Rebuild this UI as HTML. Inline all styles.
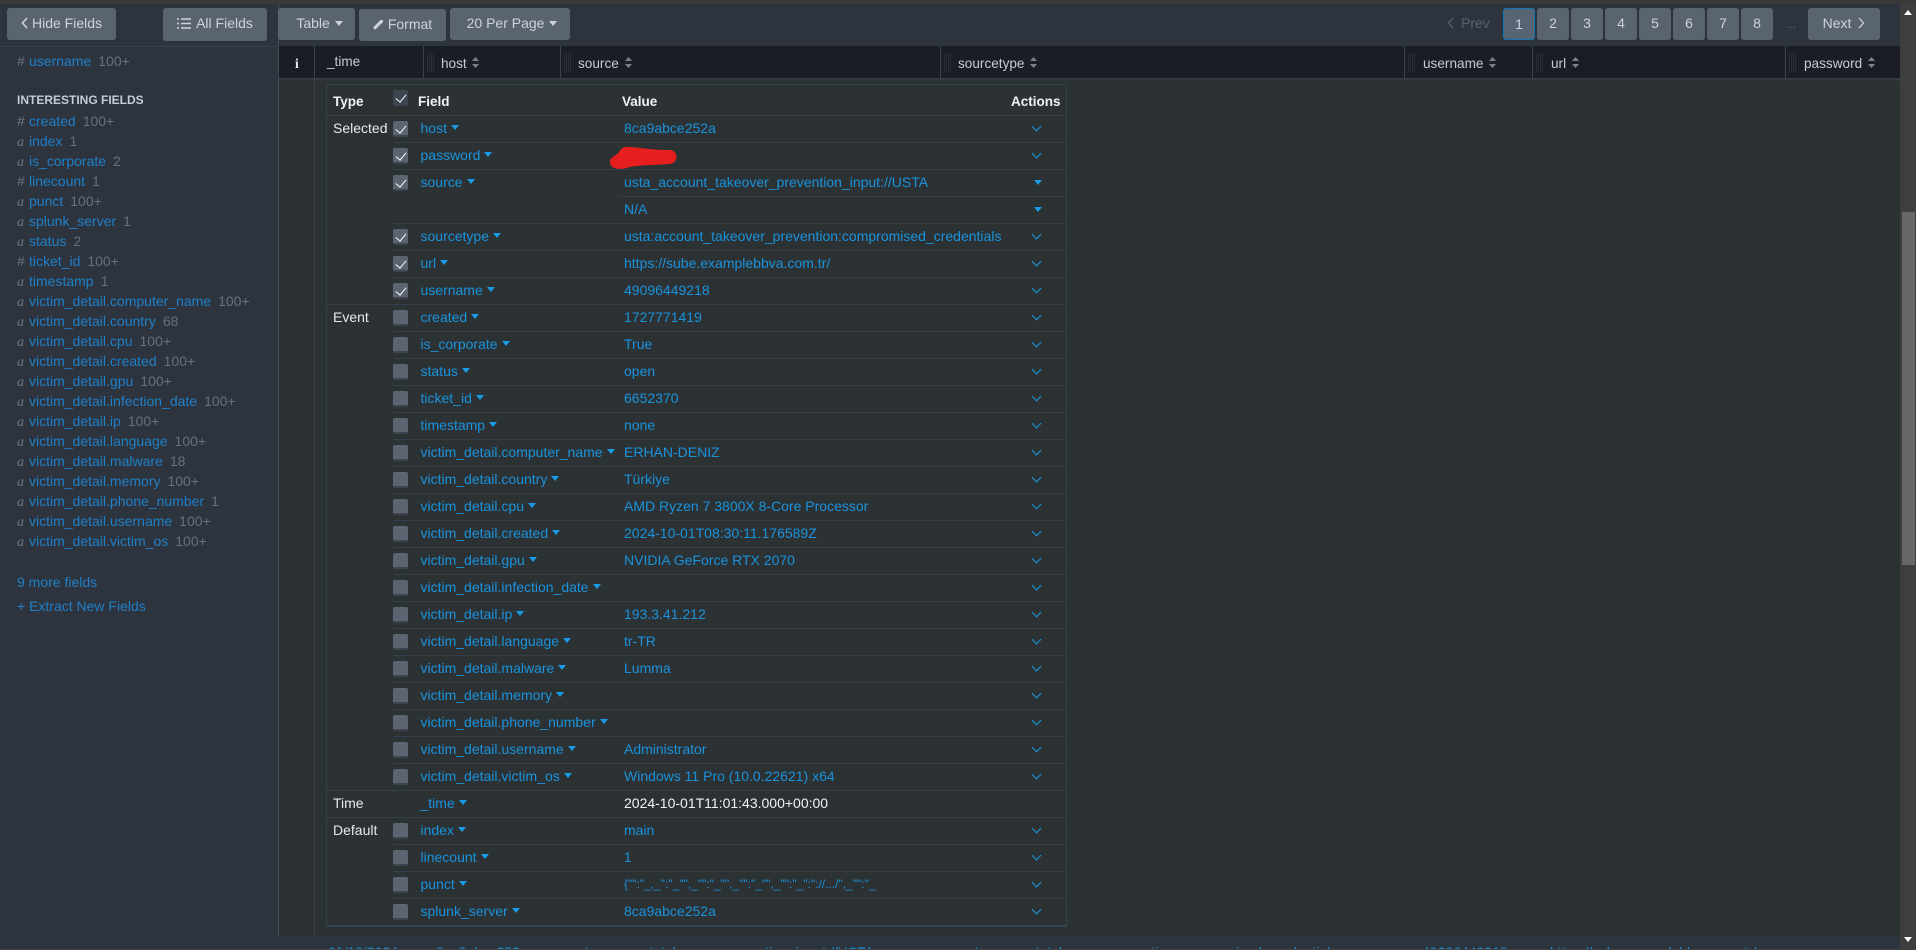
<!DOCTYPE html>
<html><head><meta charset="utf-8"><style>
*{box-sizing:border-box}
html,body{margin:0;padding:0;width:1916px;height:950px;overflow:hidden;background:#2c3134;font-family:"Liberation Sans",sans-serif;font-size:14px}
.a{position:absolute;white-space:nowrap}
#top{left:0;top:0;width:1916px;height:4px;background:#3a3a3a}
#bar{left:0;top:4px;width:1900px;height:42px;background:#2d343e}
#side{left:0;top:46px;width:278px;height:903px;background:#2d343e;border-top:1px solid #39424d}
#bottomrow{left:278px;top:936px;width:1622px;height:13px;background:#2c343e;overflow:hidden}
#bl{left:0;top:949px;width:1900px;height:1px;background:#3f3f3f}
#vb{left:278px;top:4px;width:1px;height:945px;background:#414a55}
#vb2{left:314px;top:78px;width:1px;height:871px;background:#39444f}
.b{position:absolute;background:#5a6470;color:#ccd3da;border-radius:3px;height:32px;line-height:31px;text-align:center;font-size:14px}
#hd{left:279px;top:46px;width:1621px;height:32px;background:#1a1e24;color:#c3cbd4}
#hs{left:279px;top:78px;width:1621px;height:3px;background:linear-gradient(#35404c,#2c3134)}
.hc{position:absolute;top:0;height:32px;line-height:33px;border-left:1px solid #3b434c;white-space:nowrap;font-size:13.6px}
.hc span{position:absolute;top:1px}
.hc span svg{margin-left:2px}
.hc u{position:absolute;left:3px;top:7px;width:7px;height:19px;background:repeating-linear-gradient(90deg,#2b3036 0 1px,transparent 1px 2px);opacity:.9}
#tb{left:326px;top:84px;width:741px;height:843px;border:1px solid #33424f;border-bottom:2px solid #33424f;color:#fff}
.th{position:absolute;top:0;height:31px;line-height:33px;font-weight:bold;color:#f0f3f5;font-size:13.5px}
.r{position:absolute;left:0;width:739px;height:27px;line-height:26px;color:#1a93dc}
.r>b{position:absolute;top:0;height:1px;right:0;background:#33404c}
.t{position:absolute;left:6px;color:#e6eaee;font-weight:normal}
.cb{position:absolute;left:66px;top:6px;width:15px;height:16px;background:#5b6470;border-radius:2px;border-bottom:2px solid #3e454f}
.on:after,.hcb:after{content:"";position:absolute;left:5px;top:2px;width:5px;height:9px;border:solid #fff;border-width:0 1.6px 1.6px 0;transform:rotate(40deg)}
.hcb{position:absolute;left:66px;top:5px;width:15px;height:16px;background:#3d4650;border-radius:2px}
.f{position:absolute;left:93.500px;white-space:nowrap}
.f:after,.car{content:"";display:inline-block;width:0;height:0;border:4px solid transparent;border-top:5px solid #1a9be6;border-bottom:0;margin-left:4px;vertical-align:3px}
.v{position:absolute;left:297px;white-space:nowrap}
.ch{position:absolute;left:706px;top:7.500px;width:7px;height:7px;border:solid #1a9be6;border-width:0 1.5px 1.5px 0;transform:rotate(45deg)}
.dc{position:absolute;left:707px;top:11px;width:0;height:0;border:4px solid transparent;border-top:5px solid #1a9be6;border-bottom:0;margin-left:0}
.s{position:absolute;left:17px;height:20px;line-height:20px;white-space:nowrap;color:#1f80c8;font-size:14px}
.s em{display:inline-block;width:12px;color:#6d7580;font-family:"Liberation Serif",serif;font-style:italic}
.s em.h{font-family:"Liberation Sans",sans-serif;font-style:normal}
.s i{font-style:normal;color:#68707b;margin-left:7px}
</style></head><body>
<div class="a" id="top"></div>
<div class="a" id="bar"></div>
<div class="a" id="side"></div>
<div class="a" id="vb"></div>

<div class="b" style="left:7px;top:8px;width:109px"><svg width="7" height="12" viewBox="0 0 7 12" style="vertical-align:-1px;margin-right:4px"><path d="M6 1L1.5 6 6 11" fill="none" stroke="#ccd3da" stroke-width="1.6"/></svg>Hide Fields</div>
<div class="b" style="left:163px;top:8px;width:104px;height:33px"><svg width="14" height="11" viewBox="0 0 14 11" style="vertical-align:-1px;margin-right:5px"><path d="M0 1h2M4 1h10M0 5.500h2M4 5.500h10M0 10h2M4 10h10" stroke="#ccd3da" stroke-width="1.600"/></svg>All Fields</div>
<div class="b" style="left:278px;top:8px;width:77px;padding-left:6px">Table <span class="car" style="border-top-color:#ccd3da;margin-left:1px;vertical-align:2px"></span></div>
<div class="b" style="left:359px;top:9px;width:87px"><svg width="11" height="11" viewBox="0 0 11 11" style="vertical-align:-1px;margin-right:4px"><path d="M1 10.500L0.500 8 7.500 1 10 1 10 3 3 10z" fill="#ccd3da"/></svg>Format</div>
<div class="b" style="left:450px;top:8px;width:120px;padding-left:4px">20 Per Page <span class="car" style="border-top-color:#ccd3da;margin-left:1px;vertical-align:2px"></span></div>

<div class="a" style="left:1447px;top:8px;height:32px;line-height:31px;color:#596370"><svg width="7" height="12" viewBox="0 0 7 12" style="vertical-align:-1px;margin-right:7px"><path d="M6 1L1.500 6 6 11" fill="none" stroke="#596370" stroke-width="1.300"/></svg>Prev</div>
<div class="b" style="left:1503px;top:8px;width:32px;border:1px solid #0f77b5;background:#566474">1</div>
<div class="b" style="left:1537px;top:8px;width:32px">2</div>
<div class="b" style="left:1571px;top:8px;width:32px">3</div>
<div class="b" style="left:1605px;top:8px;width:32px">4</div>
<div class="b" style="left:1639px;top:8px;width:32px">5</div>
<div class="b" style="left:1673px;top:8px;width:32px">6</div>
<div class="b" style="left:1707px;top:8px;width:32px">7</div>
<div class="b" style="left:1741px;top:8px;width:32px">8</div>
<div class="a" style="left:1786px;top:8px;height:32px;line-height:33px;color:#596370;font-size:12px">...</div>
<div class="b" style="left:1808px;top:8px;width:72px">Next <svg width="7" height="12" viewBox="0 0 7 12" style="vertical-align:-1px;margin-left:3px"><path d="M1 1l4.500 5L1 11" fill="none" stroke="#ccd3da" stroke-width="1.300"/></svg></div>

<div class="a" id="hd">
<div class="hc" style="left:0;width:35px;border:0"><span style="left:16px;font-family:'Liberation Serif',serif;font-weight:bold;color:#e8ecef">i</span></div>
<div class="hc" style="left:35px;width:109px"><span style="left:12px;top:-1px">_time</span></div>
<div class="hc" style="left:144px;width:136px"><u></u><span style="left:17px">host <svg width="7" height="11" viewBox="0 0 7 11"><path d="M0 4L3.500 0 7 4zM0 7l3.500 4L7 7z" fill="#7a838d"/></svg></span></div>
<div class="hc" style="left:281px;width:380px"><u></u><span style="left:17px">source <svg width="7" height="11" viewBox="0 0 7 11"><path d="M0 4L3.500 0 7 4zM0 7l3.500 4L7 7z" fill="#7a838d"/></svg></span></div>
<div class="hc" style="left:661px;width:465px"><u></u><span style="left:17px">sourcetype <svg width="7" height="11" viewBox="0 0 7 11"><path d="M0 4L3.500 0 7 4zM0 7l3.500 4L7 7z" fill="#7a838d"/></svg></span></div>
<div class="hc" style="left:1125px;width:128px"><u></u><span style="left:18px">username <svg width="7" height="11" viewBox="0 0 7 11"><path d="M0 4L3.500 0 7 4zM0 7l3.500 4L7 7z" fill="#7a838d"/></svg></span></div>
<div class="hc" style="left:1253px;width:253px"><u></u><span style="left:18px">url <svg width="7" height="11" viewBox="0 0 7 11"><path d="M0 4L3.500 0 7 4zM0 7l3.500 4L7 7z" fill="#7a838d"/></svg></span></div>
<div class="hc" style="left:1506px;width:115px"><u></u><span style="left:18px">password <svg width="7" height="11" viewBox="0 0 7 11"><path d="M0 4L3.500 0 7 4zM0 7l3.500 4L7 7z" fill="#7a838d"/></svg></span></div>
</div>
<div class="a" id="hs"></div>
<div class="a" id="vb2"></div>

<div class="s" style="top:51px"><em class="h">#</em>username<i>100+</i></div>
<div class="a" style="left:17px;top:93px;font-size:12px;font-weight:bold;color:#c3cbd4;line-height:14px">INTERESTING FIELDS</div>
<div class="s" style="top:111px"><em class="h">#</em>created<i>100+</i></div>
<div class="s" style="top:131px"><em>a</em>index<i>1</i></div>
<div class="s" style="top:151px"><em>a</em>is_corporate<i>2</i></div>
<div class="s" style="top:171px"><em class="h">#</em>linecount<i>1</i></div>
<div class="s" style="top:191px"><em>a</em>punct<i>100+</i></div>
<div class="s" style="top:211px"><em>a</em>splunk_server<i>1</i></div>
<div class="s" style="top:231px"><em>a</em>status<i>2</i></div>
<div class="s" style="top:251px"><em class="h">#</em>ticket_id<i>100+</i></div>
<div class="s" style="top:271px"><em>a</em>timestamp<i>1</i></div>
<div class="s" style="top:291px"><em>a</em>victim_detail.computer_name<i>100+</i></div>
<div class="s" style="top:311px"><em>a</em>victim_detail.country<i>68</i></div>
<div class="s" style="top:331px"><em>a</em>victim_detail.cpu<i>100+</i></div>
<div class="s" style="top:351px"><em>a</em>victim_detail.created<i>100+</i></div>
<div class="s" style="top:371px"><em>a</em>victim_detail.gpu<i>100+</i></div>
<div class="s" style="top:391px"><em>a</em>victim_detail.infection_date<i>100+</i></div>
<div class="s" style="top:411px"><em>a</em>victim_detail.ip<i>100+</i></div>
<div class="s" style="top:431px"><em>a</em>victim_detail.language<i>100+</i></div>
<div class="s" style="top:451px"><em>a</em>victim_detail.malware<i>18</i></div>
<div class="s" style="top:471px"><em>a</em>victim_detail.memory<i>100+</i></div>
<div class="s" style="top:491px"><em>a</em>victim_detail.phone_number<i>1</i></div>
<div class="s" style="top:511px"><em>a</em>victim_detail.username<i>100+</i></div>
<div class="s" style="top:531px"><em>a</em>victim_detail.victim_os<i>100+</i></div>
<div class="s" style="top:572px">9 more fields</div>
<div class="s" style="top:596px">+ Extract New Fields</div>

<div class="a" id="tb">
<div class="th" style="left:6px">Type</div>
<div class="hcb"></div>
<div class="th" style="left:91px">Field</div>
<div class="th" style="left:295px">Value</div>
<div class="th" style="left:684px">Actions</div>

<div class="r" style="top:30px"><b style="left:0"></b><div class="t">Selected</div><div class="cb on"></div><div class="f">host</div><div class="v">8ca9abce252a</div><div class="ch"></div></div>
<div class="r" style="top:57px"><b style="left:66px"></b><div class="cb on"></div><div class="f">password</div><div class="ch"></div></div>
<div class="r" style="top:84px"><b style="left:66px"></b><div class="cb on"></div><div class="f">source</div><div class="v">usta_account_takeover_prevention_input://USTA</div><div class="dc"></div></div>
<div class="r" style="top:111px"><b style="left:291px"></b><div class="v">N/A</div><div class="dc"></div></div>
<div class="r" style="top:138px"><b style="left:66px"></b><div class="cb on"></div><div class="f">sourcetype</div><div class="v">usta:account_takeover_prevention:compromised_credentials</div><div class="ch"></div></div>
<div class="r" style="top:165px"><b style="left:66px"></b><div class="cb on"></div><div class="f">url</div><div class="v">https://sube.examplebbva.com.tr/</div><div class="ch"></div></div>
<div class="r" style="top:192px"><b style="left:66px"></b><div class="cb on"></div><div class="f">username</div><div class="v">49096449218</div><div class="ch"></div></div>
<div class="r" style="top:219px"><b style="left:0"></b><div class="t">Event</div><div class="cb"></div><div class="f">created</div><div class="v">1727771419</div><div class="ch"></div></div>
<div class="r" style="top:246px"><b style="left:66px"></b><div class="cb"></div><div class="f">is_corporate</div><div class="v">True</div><div class="ch"></div></div>
<div class="r" style="top:273px"><b style="left:66px"></b><div class="cb"></div><div class="f">status</div><div class="v">open</div><div class="ch"></div></div>
<div class="r" style="top:300px"><b style="left:66px"></b><div class="cb"></div><div class="f">ticket_id</div><div class="v">6652370</div><div class="ch"></div></div>
<div class="r" style="top:327px"><b style="left:66px"></b><div class="cb"></div><div class="f">timestamp</div><div class="v">none</div><div class="ch"></div></div>
<div class="r" style="top:354px"><b style="left:66px"></b><div class="cb"></div><div class="f">victim_detail.computer_name</div><div class="v">ERHAN-DENIZ</div><div class="ch"></div></div>
<div class="r" style="top:381px"><b style="left:66px"></b><div class="cb"></div><div class="f">victim_detail.country</div><div class="v">Türkiye</div><div class="ch"></div></div>
<div class="r" style="top:408px"><b style="left:66px"></b><div class="cb"></div><div class="f">victim_detail.cpu</div><div class="v">AMD Ryzen 7 3800X 8-Core Processor</div><div class="ch"></div></div>
<div class="r" style="top:435px"><b style="left:66px"></b><div class="cb"></div><div class="f">victim_detail.created</div><div class="v">2024-10-01T08:30:11.176589Z</div><div class="ch"></div></div>
<div class="r" style="top:462px"><b style="left:66px"></b><div class="cb"></div><div class="f">victim_detail.gpu</div><div class="v">NVIDIA GeForce RTX 2070</div><div class="ch"></div></div>
<div class="r" style="top:489px"><b style="left:66px"></b><div class="cb"></div><div class="f">victim_detail.infection_date</div><div class="ch"></div></div>
<div class="r" style="top:516px"><b style="left:66px"></b><div class="cb"></div><div class="f">victim_detail.ip</div><div class="v">193.3.41.212</div><div class="ch"></div></div>
<div class="r" style="top:543px"><b style="left:66px"></b><div class="cb"></div><div class="f">victim_detail.language</div><div class="v">tr-TR</div><div class="ch"></div></div>
<div class="r" style="top:570px"><b style="left:66px"></b><div class="cb"></div><div class="f">victim_detail.malware</div><div class="v">Lumma</div><div class="ch"></div></div>
<div class="r" style="top:597px"><b style="left:66px"></b><div class="cb"></div><div class="f">victim_detail.memory</div><div class="ch"></div></div>
<div class="r" style="top:624px"><b style="left:66px"></b><div class="cb"></div><div class="f">victim_detail.phone_number</div><div class="ch"></div></div>
<div class="r" style="top:651px"><b style="left:66px"></b><div class="cb"></div><div class="f">victim_detail.username</div><div class="v">Administrator</div><div class="ch"></div></div>
<div class="r" style="top:678px"><b style="left:66px"></b><div class="cb"></div><div class="f">victim_detail.victim_os</div><div class="v">Windows 11 Pro (10.0.22621) x64</div><div class="ch"></div></div>
<div class="r" style="top:705px"><b style="left:0"></b><div class="t">Time</div><div class="f">_time</div><div class="v" style="color:#f0f3f5">2024-10-01T11:01:43.000+00:00</div></div>
<div class="r" style="top:732px"><b style="left:0"></b><div class="t">Default</div><div class="cb"></div><div class="f">index</div><div class="v">main</div><div class="ch"></div></div>
<div class="r" style="top:759px"><b style="left:66px"></b><div class="cb"></div><div class="f">linecount</div><div class="v">1</div><div class="ch"></div></div>
<div class="r" style="top:786px"><b style="left:66px"></b><div class="cb"></div><div class="f">punct</div><div class="v" style="font-size:12px">{"":"_,_":"_"",_"":"_"",_"":"_"",_"":"_":"://.../",_"":"_</div><div class="ch"></div></div>
<div class="r" style="top:813px"><b style="left:66px"></b><div class="cb"></div><div class="f">splunk_server</div><div class="v">8ca9abce252a</div><div class="ch"></div></div>
</div>

<svg class="a" style="left:608px;top:145px" width="72" height="26" viewBox="0 0 72 26"><path d="M17 2C25 1 38 5 62 5 70 5 71 18 62 19 48 20 30 20 22 22 14 25 2 25 2 17 2 12 8 11 11 7 13 4 14 3 17 2z" fill="#e61e1e"/></svg>

<div class="a" id="bottomrow">
<div class="a" style="left:50px;top:7.500px;color:#1a93dc">01/10/2024</div>
<div class="a" style="left:158px;top:7.500px;color:#1a93dc">8ca9abce252a</div>
<div class="a" style="left:292px;top:7.500px;color:#1a93dc">usta_account_takeover_prevention_input://USTA</div>
<div class="a" style="left:682px;top:7.500px;color:#1a93dc">usta:account_takeover_prevention:compromised_credentials</div>
<div class="a" style="left:1144px;top:7.500px;color:#1a93dc">49096449218</div>
<div class="a" style="left:1272px;top:7.500px;color:#1a93dc">https://sube.examplebbva.com.tr/</div>
</div>
<div class="a" id="bl"></div>
<div class="a" style="left:1900px;top:4px;width:16px;height:946px;background:#3e3e3e"></div>
<div class="a" style="left:1902px;top:212px;width:13px;height:353px;background:#686868"></div>
<div class="a" style="left:1904px;top:10px;width:0;height:0;border:4px solid transparent;border-bottom:5px solid #fff;border-top:0"></div>
<div class="a" style="left:1904px;top:937px;width:0;height:0;border:4px solid transparent;border-top:5px solid #fff;border-bottom:0"></div>
</body></html>
